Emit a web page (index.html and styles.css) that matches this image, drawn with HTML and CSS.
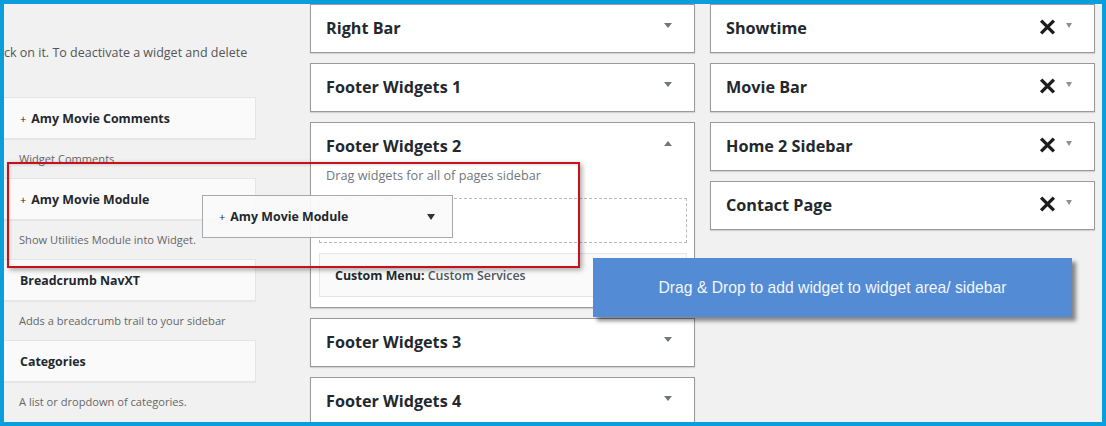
FILE: index.html
```html
<!DOCTYPE html>
<html>
<head>
<meta charset="utf-8">
<link rel="stylesheet" href="styles.css">
</head>
<body>
<div class="frame">
  <div class="screen">
    <div class="col-left">
      <p class="intro">ck on it. To deactivate a widget and delete</p>
      <div class="widget"><span class="plus">+</span>Amy Movie Comments</div>
      <p class="desc">Widget Comments</p>
      <div class="widget"><span class="plus">+</span>Amy Movie Module</div>
      <p class="desc">Show Utilities Module into Widget.</p>
      <div class="widget">Breadcrumb NavXT</div>
      <p class="desc">Adds a breadcrumb trail to your sidebar</p>
      <div class="widget">Categories</div>
      <p class="desc">A list or dropdown of categories.</p>
    </div>

    <div class="col">
      <div class="sb"><div class="sb-head"><h2>Right Bar</h2><span class="caret"></span></div></div>
      <div class="sb"><div class="sb-head"><h2>Footer Widgets 1</h2><span class="caret"></span></div></div>
      <div class="sb open">
        <div class="sb-head"><h2>Footer Widgets 2</h2><span class="caret up"></span></div>
        <p class="sb-desc">Drag widgets for all of pages sidebar</p>
        <div class="placeholder"></div>
        <div class="in-widget"><span class="in-text"><strong>Custom Menu:</strong> <span class="in-title">Custom Services</span></span></div>
      </div>
      <div class="sb"><div class="sb-head"><h2>Footer Widgets 3</h2><span class="caret"></span></div></div>
      <div class="sb"><div class="sb-head"><h2>Footer Widgets 4</h2><span class="caret"></span></div></div>
    </div>

    <div class="col">
      <div class="sb"><div class="sb-head"><h2>Showtime</h2><svg class="x" viewBox="0 0 16 16"><path d="M2 1.5L14 13.5M14 1.5L2 13.5"/></svg><span class="caret light"></span></div></div>
      <div class="sb"><div class="sb-head"><h2>Movie Bar</h2><svg class="x" viewBox="0 0 16 16"><path d="M2 1.5L14 13.5M14 1.5L2 13.5"/></svg><span class="caret light"></span></div></div>
      <div class="sb"><div class="sb-head"><h2>Home 2 Sidebar</h2><svg class="x" viewBox="0 0 16 16"><path d="M2 1.5L14 13.5M14 1.5L2 13.5"/></svg><span class="caret light"></span></div></div>
      <div class="sb"><div class="sb-head"><h2>Contact Page</h2><svg class="x" viewBox="0 0 16 16"><path d="M2 1.5L14 13.5M14 1.5L2 13.5"/></svg><span class="caret light"></span></div></div>
    </div>

    <div class="red-box"></div>
    <div class="drag-helper"><span class="plus">+</span>Amy Movie Module<span class="caret dark"></span></div>
    <div class="tip">Drag &amp; Drop to add widget to widget area/ sidebar</div>
  </div>
</div>
</body>
</html>
```

FILE: styles.css
```css
html, body {
  margin: 0;
  padding: 0;
}
body {
  width: 1106px;
  height: 426px;
  overflow: hidden;
  font-family: "Open Sans", "Noto Sans", sans-serif;
  color: #23282d;
}
.frame {
  box-sizing: border-box;
  width: 1106px;
  height: 426px;
  border: 4px solid #0a9fdc;
  overflow: hidden;
  background: #f1f1f1;
}
.screen {
  position: relative;
  display: flex;
  align-items: flex-start;
  height: 100%;
}

/* left column */
.col-left {
  width: 252px;
  flex: none;
}
.intro {
  margin: 0;
  height: 93px;
  padding-top: 39px;
  box-sizing: border-box;
  font-size: 12.5px;
  line-height: 20px;
  color: #555;
  white-space: nowrap;
}
.widget {
  box-sizing: border-box;
  height: 42px;
  border: 1px solid #e5e5e5;
  border-left: 0;
  background: #fafafa;
  box-shadow: 0 1px 1px rgba(0,0,0,0.04);
  padding-left: 16px;
  display: flex;
  align-items: center;
  font-size: 12.4px;
  font-weight: 700;
}
.plus {
  font-weight: 400;
  font-size: 11px;
  margin-right: 5px;
}
.desc {
  margin: 0;
  height: 39px;
  line-height: 39px;
  padding-left: 15px;
  font-size: 11.1px;
  color: #666;
  white-space: nowrap;
}

/* sidebar columns */
.col {
  width: 385px;
  flex: none;
  display: flex;
  flex-direction: column;
  gap: 10px;
  margin-left: 54px;
}
.col + .col {
  margin-left: 15px;
}
.sb {
  box-sizing: border-box;
  border: 1px solid #9a9a9a;
  background: #fff;
  box-shadow: 0 1px 1px rgba(0,0,0,0.12);
}
.sb-head {
  height: 47px;
  box-sizing: border-box;
  display: flex;
  align-items: center;
  padding: 0 22px 1px 15px;
}
.sb-head h2 {
  margin: 0;
  font-size: 16.2px;
  font-weight: 700;
  flex: 1;
  color: #23282d;
  white-space: nowrap;
}
.caret {
  width: 0;
  height: 0;
  border-left: 4px solid transparent;
  border-right: 4px solid transparent;
  border-top: 5px solid #72777c;
  margin-top: -6px;
}
.caret.up {
  border-top: 0;
  border-bottom: 5px solid #72777c;
}
.caret.light {
  border-top-color: #8c8f94;
  border-left-width: 3.5px;
  border-right-width: 3.5px;
}
.x {
  width: 17px;
  height: 17px;
  margin-right: 10px;
  margin-top: -1px;
}
.x path {
  stroke: #1d1d1d;
  stroke-width: 3.2;
  fill: none;
}
.sb-desc {
  margin: -4px 0 0;
  padding-left: 15px;
  font-size: 12.7px;
  line-height: 18px;
  color: #72777c;
  white-space: nowrap;
}
.placeholder {
  margin: 14px 7px 0 8px;
  height: 45px;
  box-sizing: border-box;
  border: 1px dashed #b4b9be;
}
.in-widget {
  margin: 10px 7px 10px 8px;
  height: 44px;
  box-sizing: border-box;
  border: 1px solid #e5e5e5;
  background: #fafafa;
  display: flex;
  align-items: center;
  padding-left: 15px;
  font-size: 12.4px;
  white-space: nowrap;
}
.in-widget strong {
  font-weight: 700;
}
.in-title {
  font-weight: 600;
  color: #50575e;
}

/* overlays */
.red-box {
  position: absolute;
  left: 3px;
  top: 158px;
  width: 573px;
  height: 106px;
  box-sizing: border-box;
  border: 2px solid #c3121c;
  box-shadow: 2px 2px 5px rgba(0,0,0,0.35), inset 1px 1px 3px rgba(0,0,0,0.15);
}
.drag-helper {
  position: absolute;
  left: 198px;
  top: 191px;
  width: 251px;
  height: 43px;
  box-sizing: border-box;
  border: 1px solid #a7aaad;
  background: rgba(250,250,250,0.92);
  display: flex;
  align-items: center;
  padding: 0 17px 0 16px;
  font-size: 12.4px;
  font-weight: 700;
}
.drag-helper .caret {
  margin-left: auto;
  margin-top: 0;
  border-top-color: #333;
  border-left-width: 4px;
  border-right-width: 4px;
  border-top-width: 6px;
}
.tip {
  position: absolute;
  left: 589px;
  top: 254px;
  width: 479px;
  height: 59px;
  background: #538bd5;
  box-shadow: 4px 4px 4px rgba(0,0,0,0.45);
  display: flex;
  align-items: center;
  justify-content: center;
  font-family: "Liberation Sans", Arial, sans-serif;
  font-size: 15.7px;
  color: #f2f6fc;
}
```
